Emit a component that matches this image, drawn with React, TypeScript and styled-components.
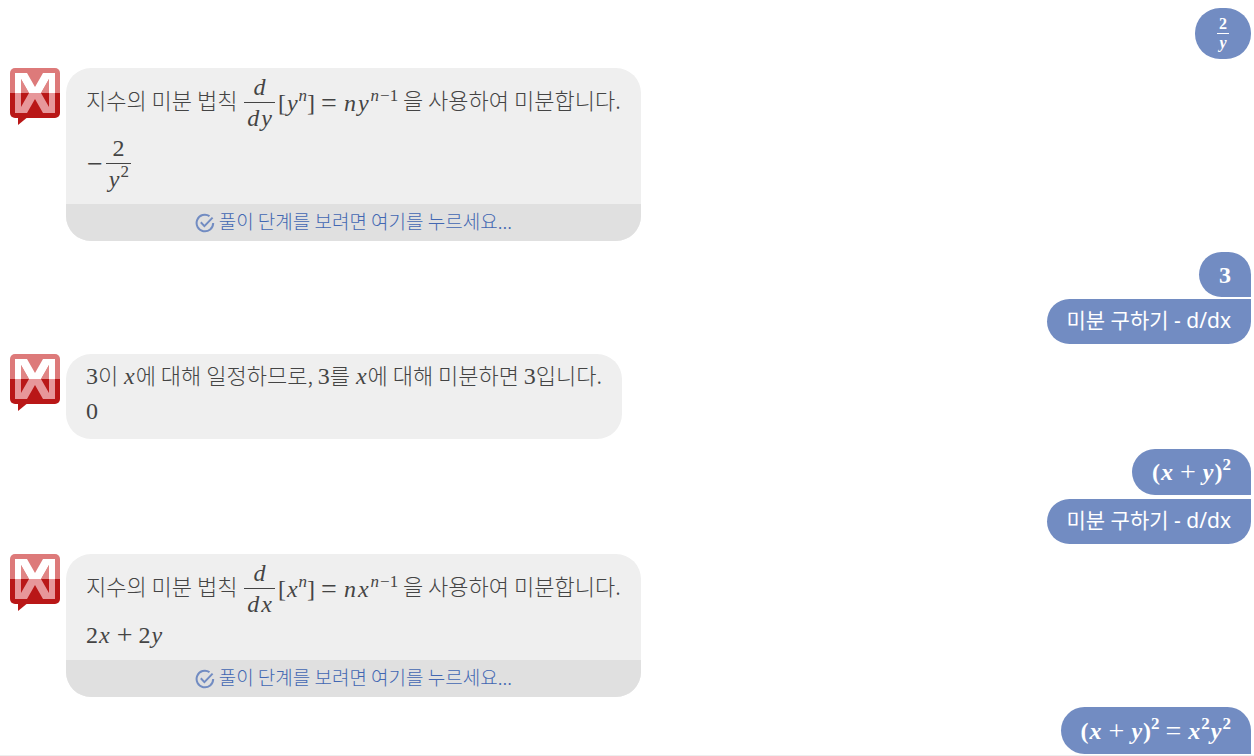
import React from "react";
import styled, { createGlobalStyle, css } from "styled-components";

const GlobalStyle = createGlobalStyle`
  * { box-sizing: border-box; }
  body {
    margin: 0;
    background: #fff;
    color: #444;
    font-family: "Noto Sans", "Noto Sans CJK KR", sans-serif;
    font-size: 21px;
  }
`;

const Page = styled.main`
  display: flex;
  flex-direction: column;
  padding: 8px 3px 1px 10px;
  border-bottom: 1px solid #eee;
`;

const UserGroup = styled.section<{ $gap?: number }>`
  display: flex;
  flex-direction: column;
  align-items: flex-end;
  gap: ${(p) => p.$gap ?? 2}px;
`;

type Join = "none" | "top" | "bottom";

const UserBubble = styled.div<{ $join?: Join; $height?: number }>`
  display: flex;
  align-items: center;
  min-height: ${(p) => p.$height ?? 45}px;
  padding: 0 20px;
  border-radius: 25px;
  background: #728cc2;
  color: #fff;
  line-height: 30px;
  white-space: nowrap;
  ${(p) => p.$join === "bottom" && css`border-bottom-right-radius: 0;`}
  ${(p) => p.$join === "top" && css`border-top-right-radius: 0;`}
`;

const BotRow = styled.section<{ $before?: number; $after?: number }>`
  display: flex;
  align-items: flex-start;
  gap: 6px;
  margin: ${(p) => p.$before ?? 10}px 0 ${(p) => p.$after ?? 10}px;
`;

const BotBubble = styled.div`
  border-radius: 25px;
  background: #efefef;
  overflow: hidden;
`;

const BotBody = styled.div<{ $last?: boolean }>`
  padding: 4px 20px ${(p) => (p.$last ? 12 : 10)}px;
  font-family: "Noto Sans CJK KR", sans-serif;
  font-size: 22px;
  font-weight: 300;
`;

const Line = styled.div<{ $height: number }>`
  display: flex;
  align-items: center;
  min-height: ${(p) => p.$height}px;
  line-height: 30px;
  white-space: pre;
`;

const Text = styled.span<{ $raised?: boolean }>`
  padding-bottom: ${(p) => (p.$raised ? 8 : 4)}px;
`;

const StepsButton = styled.button`
  display: flex;
  align-items: center;
  justify-content: center;
  gap: 4px;
  width: 100%;
  height: 37px;
  padding: 0;
  border: 0;
  background: #e0e0e0;
  color: #4267b2;
  font-family: "Noto Sans CJK KR", sans-serif;
  font-size: 19px;
  font-weight: 300;
  line-height: 30px;
  cursor: pointer;
`;

const MathText = styled.span<{ $bold?: boolean; $small?: boolean }>`
  display: inline-flex;
  align-items: center;
  font-family: "Liberation Serif", serif;
  font-size: ${(p) => (p.$small ? 16 : 24)}px;
  font-weight: ${(p) => (p.$bold ? 700 : 400)};
  line-height: 30px;
`;

const Variable = styled.i`
  padding: 0 1px;
`;

const Sup = styled.span`
  padding-bottom: 14px;
  font-size: 17px;
  line-height: 16px;
`;

const Operator = styled.span<{ $unary?: boolean }>`
  padding: 0 ${(p) => (p.$unary ? 1 : 6)}px;
  font-size: 28px;
  font-weight: 400;
`;

const Fraction = styled.span<{ $small?: boolean }>`
  display: inline-flex;
  flex-direction: column;
  align-items: center;
  margin: 0 ${(p) => (p.$small ? 2 : 3)}px 0 2px;
  line-height: ${(p) => (p.$small ? 18 : 30)}px;

  > :first-child {
    align-self: stretch;
    text-align: center;
    border-bottom: 1px solid currentColor;
  }
  > * { padding: 0 2px; }
`;

const Avatar = () => (
  <svg width="50" height="57" viewBox="0 0 50 57" role="img" aria-label="Mathway">
    <path d="M8 48v9l11-9z" fill="#b91717" />
    <path d="M0 25h50v20a5 5 0 0 1-5 5H5a5 5 0 0 1-5-5z" fill="#b91717" />
    <path d="M0 25V5a5 5 0 0 1 5-5h40a5 5 0 0 1 5 5v20z" fill="#dd7a7a" />
    <path d="M5 25V5h12l8 14 8-14h12v20h-6V11l-8 14H19l-8-14v14z" fill="#fff" />
    <path d="M11 25V11l8 14zM39 25V11l-8 14z" fill="#e08585" />
    <path d="M5 25v20h12l8-14 8 14h12V25h-6v14l-8-14H19l-8 14V25z" fill="#e7979a" />
  </svg>
);

const CheckIcon = () => (
  <svg width="20" height="20" viewBox="0 0 20 20" fill="none" stroke="#728cc2" strokeWidth="2" aria-hidden="true">
    <path d="M14.5 3.1A8.3 8.3 0 1 0 18.2 10" />
    <path d="M5.8 9.3l3.6 3.8 8.2-8.5" />
  </svg>
);

const PowerRule = ({ v }: { v: string }) => (
  <Line $height={61}>
    <Text $raised>지수의 미분 법칙 </Text>
    <MathText>
      <Fraction>
        <i>d</i>
        <span><Variable>d</Variable><Variable>{v}</Variable></span>
      </Fraction>
      <span>[</span>
      <Variable>{v}</Variable>
      <Sup><i>n</i></Sup>
      <span>]</span>
      <Operator>=</Operator>
      <Variable>n</Variable>
      <Variable>{v}</Variable>
      <Sup><Variable>n</Variable>−1</Sup>
    </MathText>
    <Text $raised> 을 사용하여 미분합니다.</Text>
  </Line>
);

const StepsLink = () => (
  <StepsButton type="button">
    <CheckIcon />
    <Text>풀이 단계를 보려면 여기를 누르세요...</Text>
  </StepsButton>
);

const SquaredSum = () => (
  <>
    <span>(</span>
    <Variable>x</Variable>
    <Operator>+</Operator>
    <Variable>y</Variable>
    <span>)</span>
    <Sup>2</Sup>
  </>
);

const X = () => <MathText><Variable>x</Variable></MathText>;
const Three = () => <MathText>3</MathText>;

export default function App() {
  return (
    <>
      <GlobalStyle />
      <Page>
        <UserGroup>
          <UserBubble $height={51}>
            <MathText $bold $small>
              <Fraction $small>
                <span>2</span>
                <i>y</i>
              </Fraction>
            </MathText>
          </UserBubble>
        </UserGroup>

        <BotRow $before={9} $after={11}>
          <Avatar />
          <BotBubble>
            <BotBody>
              <PowerRule v="y" />
              <Line $height={61}>
                <MathText>
                  <Operator $unary>−</Operator>
                  <Fraction>
                    <span>2</span>
                    <MathText><Variable>y</Variable><Sup>2</Sup></MathText>
                  </Fraction>
                </MathText>
              </Line>
            </BotBody>
            <StepsLink />
          </BotBubble>
        </BotRow>

        <UserGroup>
          <UserBubble $join="bottom"><MathText $bold>3</MathText></UserBubble>
          <UserBubble $join="top"><Text>미분 구하기 - d/dx</Text></UserBubble>
        </UserGroup>

        <BotRow>
          <Avatar />
          <BotBubble>
            <BotBody $last>
              <Line $height={36}>
                <Three /><Text>이 </Text><X /><Text>에 대해 일정하므로, </Text>
                <Three /><Text>를 </Text><X /><Text>에 대해 미분하면 </Text>
                <Three /><Text>입니다.</Text>
              </Line>
              <Line $height={33}><MathText>0</MathText></Line>
            </BotBody>
          </BotBubble>
        </BotRow>

        <UserGroup $gap={4}>
          <UserBubble $join="bottom" $height={46}>
            <MathText $bold><SquaredSum /></MathText>
          </UserBubble>
          <UserBubble $join="top"><Text>미분 구하기 - d/dx</Text></UserBubble>
        </UserGroup>

        <BotRow>
          <Avatar />
          <BotBubble>
            <BotBody>
              <PowerRule v="x" />
              <Line $height={31}>
                <MathText>
                  2<Variable>x</Variable>
                  <Operator>+</Operator>
                  2<Variable>y</Variable>
                </MathText>
              </Line>
            </BotBody>
            <StepsLink />
          </BotBubble>
        </BotRow>

        <UserGroup>
          <UserBubble $join="bottom" $height={47}>
            <MathText $bold>
              <SquaredSum />
              <Operator>=</Operator>
              <Variable>x</Variable><Sup>2</Sup>
              <Variable>y</Variable><Sup>2</Sup>
            </MathText>
          </UserBubble>
        </UserGroup>
      </Page>
    </>
  );
}
